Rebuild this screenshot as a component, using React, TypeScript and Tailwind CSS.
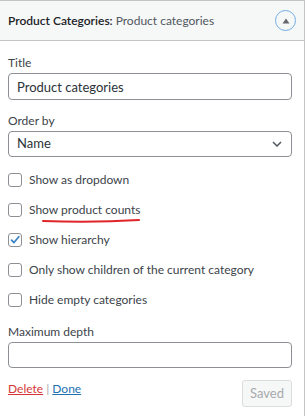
import { ReactNode } from "react";

const font = { fontFamily: 'Lato, "Noto Sans", sans-serif' };

const CheckRow = ({ label, checked, children }: { label: string; checked?: boolean; children?: ReactNode }) => {
  return (
    <div className="relative flex h-[30px] items-center gap-[7px]">
      <span className="flex h-[14px] w-[14px] items-center justify-center rounded-[3px] border border-[#8c8f94] bg-white">
        {checked && (
          <svg width="14" height="14" viewBox="0 0 14 14">
            <path d="M3 7.2 L5.8 10 L11.5 3.2" fill="none" stroke="#3582c4" strokeWidth="2" strokeLinecap="round" strokeLinejoin="round" />
          </svg>
        )}
      </span>
      <span className="text-[#3c434a]">{label}</span>
      {children}
    </div>
  );
};

export default function App() {
  return (
    <div className="min-h-[416px] bg-white" style={font}>
      <div className="w-[305px] border-t border-r border-[#c3c4c7]">
        {/* widget header */}
        <div className="flex h-[40px] items-center justify-between border-b border-[#c3c4c7] bg-[#f6f7f7] pl-2 pr-2">
          <h3 className="text-[12px] font-semibold text-[#1d2327]">
            Product Categories: <span className="font-normal text-[#50575e]">Product categories</span>
          </h3>
          <span className="flex h-[21px] w-[21px] items-center justify-center rounded-full border-[1.5px] border-[#72aee6]">
            <svg width="8" height="6" viewBox="0 0 8 6">
              <path d="M4 0.5 L7.5 5.5 L0.5 5.5 Z" fill="#646970" />
            </svg>
          </span>
        </div>

        {/* widget body */}
        <div className="pl-2 pr-3 pt-[11px] pb-4 text-[12px] text-[#3c434a]">
          <label className="block leading-[21px]" htmlFor="title">Title</label>
          <input
            id="title"
            className="block h-[27px] w-full rounded-[4px] border border-[#8c8f94] px-2 text-[13px] text-[#2c3338]"
            defaultValue="Product categories"
          />

          <label className="mt-[10px] block leading-[21px]" htmlFor="orderby">Order by</label>
          <div className="flex h-[26px] w-full items-center justify-between rounded-[4px] border border-[#8c8f94] pl-2 pr-[9px] text-[13px] text-[#2c3338]">
            <span>Name</span>
            <svg width="10" height="6" viewBox="0 0 10 6">
              <path d="M1 1 L5 5 L9 1" fill="none" stroke="#50575e" strokeWidth="1.5" />
            </svg>
          </div>

          <div className="mt-[8px]">
            <CheckRow label="Show as dropdown" />
            <CheckRow label="Show product counts">
              <svg className="absolute left-[34px] top-[23px]" width="100" height="6" viewBox="0 0 100 6">
                <path d="M1 3 Q50 5 97 2" fill="none" stroke="#e0242a" strokeWidth="2" strokeLinecap="round" />
              </svg>
            </CheckRow>
            <CheckRow label="Show hierarchy" checked />
            <CheckRow label="Only show children of the current category" />
            <CheckRow label="Hide empty categories" />
          </div>

          <label className="mt-[6px] block leading-[21px]" htmlFor="depth">Maximum depth</label>
          <input id="depth" className="block h-[26px] w-full rounded-[4px] border border-[#8c8f94] px-2" />

          <div className="mt-3 flex items-start justify-between">
            <div className="leading-[18px]">
              <a className="text-[#d63638] underline">Delete</a>
              <span className="text-[#a7aaad]"> | </span>
              <a className="text-[#2271b1] underline">Done</a>
            </div>
            <button className="h-[27px] w-[50px] rounded-[3px] border border-[#dcdcde] bg-[#f6f7f7] text-[13px] text-[#a7aaad]">
              Saved
            </button>
          </div>
        </div>
      </div>
    </div>
  );
}
